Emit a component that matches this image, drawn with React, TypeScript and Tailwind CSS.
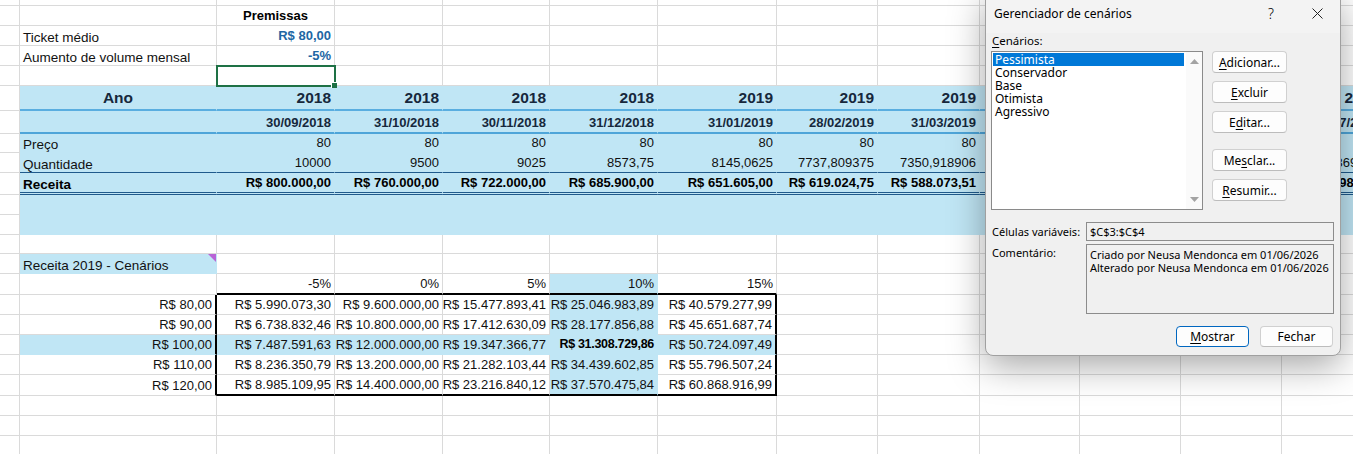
import React from 'react';
import { twMerge } from 'tailwind-merge';

const GRID =
  'grid grid-cols-[20px_197px_118px_108px_107px_108px_119px_101px_102px_100px_101px_101px_101px]';
const COLS = 13;

const BLUE = 'bg-[#c0e6f5] border-[#c0e6f5]';
const NUM = 'justify-end text-[13px]';
const HEAD = 'font-bold text-[#16283c]';
const BOX_R = 'border-r-2 border-r-black';
const BOX_B = 'border-b-2 border-b-black';

type Cell = { v?: React.ReactNode; k?: string } | undefined;

function Row({ h, cells = [], k = '' }: { h: string; cells?: Cell[]; k?: string }) {
  return (
    <div className={`${GRID} ${h}`}>
      {Array.from({ length: COLS }, (_, i) => {
        const c = cells[i];
        return (
          <div
            key={i}
            className={twMerge(
              'flex items-end overflow-hidden whitespace-nowrap border-r border-b border-[#dadada] px-[3px] leading-[14px]',
              i > 0 ? k : '',
              c?.k
            )}
          >
            {c?.v}
          </div>
        );
      })}
    </div>
  );
}

const years = ['2018', '2018', '2018', '2018', '2019', '2019', '2019', '2019', '2019', '2019', '2019'];
const dates = [
  '30/09/2018', '31/10/2018', '30/11/2018', '31/12/2018', '31/01/2019', '28/02/2019',
  '31/03/2019', '30/04/2019', '31/05/2019', '30/06/2019', '31/07/2019',
];
const qty = [
  '10000', '9500', '9025', '8573,75', '8145,0625', '7737,809375', '7350,918906',
  '6983,372961', '6634,204313', '6302,494097', '5987,369392',
];
const revenue = [
  'R$ 800.000,00', 'R$ 760.000,00', 'R$ 722.000,00', 'R$ 685.900,00', 'R$ 651.605,00',
  'R$ 619.024,75', 'R$ 588.073,51', 'R$ 558.669,84', 'R$ 530.736,35', 'R$ 504.199,53',
  'R$ 478.989,55',
];

const pcts = ['-5%', '0%', '5%', '10%', '15%'];
const scenarios = [
  ['R$ 80,00', 'R$ 5.990.073,30', 'R$ 9.600.000,00', 'R$ 15.477.893,41', 'R$ 25.046.983,89', 'R$ 40.579.277,99'],
  ['R$ 90,00', 'R$ 6.738.832,46', 'R$ 10.800.000,00', 'R$ 17.412.630,09', 'R$ 28.177.856,88', 'R$ 45.651.687,74'],
  ['R$ 100,00', 'R$ 7.487.591,63', 'R$ 12.000.000,00', 'R$ 19.347.366,77', 'R$ 31.308.729,86', 'R$ 50.724.097,49'],
  ['R$ 110,00', 'R$ 8.236.350,79', 'R$ 13.200.000,00', 'R$ 21.282.103,44', 'R$ 34.439.602,85', 'R$ 55.796.507,24'],
  ['R$ 120,00', 'R$ 8.985.109,95', 'R$ 14.400.000,00', 'R$ 23.216.840,12', 'R$ 37.570.475,84', 'R$ 60.868.916,99'],
];

function Btn({ children, primary = false, wide = false }: { children: React.ReactNode; primary?: boolean; wide?: boolean }) {
  return (
    <button
      className={twMerge(
        'flex h-[22px] w-[75px] items-center justify-center rounded-[4px] border border-[#d0d0d0] border-b-[#bcbcbc] bg-[#fdfdfd] text-[12px] leading-[13px] text-black',
        wide ? '' : 'h-[21px] w-[73px]',
        primary ? 'border-[#0067c0] border-b-[#0067c0]' : ''
      )}
    >
      {children}
    </button>
  );
}

const U = ({ children }: { children: React.ReactNode }) => (
  <span className="underline decoration-1 underline-offset-[2px]">{children}</span>
);

function ScenarioDialog() {
  const items = ['Pessimista', 'Conservador', 'Base', 'Otimista', 'Agressivo'];
  return (
    <div className="absolute left-[985px] top-[-8px] flex h-[364px] w-[356px] flex-col overflow-hidden rounded-[8px] border border-[#a0a0a0] bg-[#f0f0f0] font-['Noto_Sans',sans-serif] text-[11px] leading-[13px] text-black shadow-[0_10px_36px_rgba(0,0,0,0.35)]">
      {/* title bar */}
      <div className="flex h-[40px] shrink-0 items-center bg-[#f3f3f3] pl-[8px] text-[12px]">
        <span className="flex-1">Gerenciador de cenários</span>
        <span className="flex w-[46px] justify-center text-[14px] font-light">?</span>
        <span className="flex w-[46px] justify-center">
          <svg width="11" height="11" viewBox="0 0 11 11">
            <path d="M0.5 0.5 L10.5 10.5 M10.5 0.5 L0.5 10.5" stroke="#222" strokeWidth="1" fill="none" />
          </svg>
        </span>
      </div>

      <div className="flex flex-col px-[5px] pt-[1px]">
        <div className="pl-[1px] text-[11.5px]">
          <U>C</U>enários:
        </div>

        <div className="mt-[4px] flex">
          <div className="flex h-[159px] w-[212px] border border-[#8a8a8a] bg-white">
            <div className="flex flex-1 flex-col pl-[1px] pr-[2px] pt-[1px]">
              {items.map((it, i) => (
                <div
                  key={it}
                  className={`h-[13px] px-[2px] text-[12px] leading-[13px] ${i === 0 ? 'bg-[#0078d7] text-white' : ''}`}
                >
                  {it}
                </div>
              ))}
            </div>
            <div className="flex w-[16px] flex-col items-center justify-between bg-[#fafafa] py-[7px]">
              <svg width="9" height="5" viewBox="0 0 9 5">
                <path d="M0 5 L4.5 0 L9 5 Z" fill="#a3a3a3" />
              </svg>
              <svg width="9" height="5" viewBox="0 0 9 5">
                <path d="M0 0 L9 0 L4.5 5 Z" fill="#a3a3a3" />
              </svg>
            </div>
          </div>

          <div className="ml-[9px] flex flex-col gap-[8px]">
            <Btn wide>
              <U>A</U>dicionar...
            </Btn>
            <Btn wide>
              <U>E</U>xcluir
            </Btn>
            <Btn wide>
              E<U>d</U>itar...
            </Btn>
            <div className="mt-[8px]">
              <Btn wide>
                Me<U>s</U>clar...
              </Btn>
            </div>
            <Btn wide>
              <U>R</U>esumir...
            </Btn>
          </div>
        </div>

        <div className="mt-[12px] flex items-center">
          <div className="w-[95px] pl-[1px]">Células variáveis:</div>
          <div className="flex h-[19px] w-[248px] items-center border border-[#8c8c8c] px-[3px]">$C$3:$C$4</div>
        </div>

        <div className="mt-[3px] flex">
          <div className="w-[95px] pl-[1px] pt-[2px]">Comentário:</div>
          <div className="h-[70px] w-[248px] border border-[#8c8c8c] px-[3px] pt-[3px]">
            <div>Criado por Neusa Mendonca em 01/06/2026</div>
            <div>Alterado por Neusa Mendonca em 01/06/2026</div>
          </div>
        </div>

        <div className="mt-[12px] flex justify-end gap-[11px] pr-[2px]">
          <Btn primary>
            <U>M</U>ostrar
          </Btn>
          <Btn>Fechar</Btn>
        </div>
      </div>
    </div>
  );
}

export default function App() {
  const u = undefined;
  return (
    <div className="relative h-[454px] w-[1353px] overflow-hidden bg-white font-['Liberation_Sans',Arial,sans-serif] text-[13.5px] text-[#111]">
      <Row h="h-[6px]" />
      <Row h="h-[20px]" cells={[u, u, { v: 'Premissas', k: 'justify-center text-[13px] font-bold text-black' }]} />
      <Row h="h-[20px]" cells={[u, { v: 'Ticket médio' }, { v: 'R$ 80,00', k: `${NUM} font-bold text-[#2166a3]` }]} />
      <Row h="h-[20px]" cells={[u, { v: 'Aumento de volume mensal' }, { v: '-5%', k: `${NUM} font-bold text-[#2166a3]` }]} />
      <Row
        h="h-[20px]"
        cells={[
          u,
          u,
          {
            k: 'relative overflow-visible',
            v: (
              <>
                <span className="absolute -left-px -top-px h-[22px] w-[120px] border-2 border-[#1e7145]" />
                <span className="absolute -bottom-[3px] -right-[3px] h-[6px] w-[6px] border-l border-t border-white bg-[#1e7145]" />
              </>
            ),
          },
        ]}
      />

      {/* projection table */}
      <Row
        h="h-[25px]"
        k={`${BLUE} border-b-2 border-b-[#5aaee0] leading-[16px]`}
        cells={[u, { v: 'Ano', k: `${HEAD} justify-center text-[15.5px]` }, ...years.map((y) => ({ v: y, k: `${HEAD} justify-end text-[15.5px]` }))]}
      />
      <Row
        h="h-[23px]"
        k={`${BLUE} border-b-2 border-b-[#4ea5d9]`}
        cells={[u, u, ...dates.map((d) => ({ v: d, k: `${HEAD} justify-end text-[13px]` }))]}
      />
      <Row h="h-[19px]" k={BLUE} cells={[u, { v: 'Preço' }, ...dates.map(() => ({ v: '80', k: NUM }))]} />
      <Row
        h="h-[20px]"
        k={`${BLUE} border-b-[#1f5a8c]`}
        cells={[u, { v: 'Quantidade' }, ...qty.map((q) => ({ v: q, k: NUM }))]}
      />
      <Row
        h="h-[22px]"
        k={`${BLUE} border-double border-b-[3px] border-b-[#1f5a8c]`}
        cells={[u, { v: 'Receita', k: 'font-bold text-black' }, ...revenue.map((r) => ({ v: r, k: `${NUM} font-bold text-black` }))]}
      />
      <Row h="h-[20px]" k={BLUE} />
      <Row h="h-[20px]" k={BLUE} />
      <Row h="h-[19px]" />

      {/* scenario table */}
      <Row
        h="h-[20px]"
        cells={[
          u,
          {
            k: `${BLUE} relative`,
            v: (
              <>
                Receita 2019 - Cenários
                <svg className="absolute right-0 top-0" width="8" height="8" viewBox="0 0 8 8">
                  <path d="M0 0 L8 0 L8 8 Z" fill="#b864d6" />
                </svg>
              </>
            ),
          },
        ]}
      />
      <Row
        h="h-[21px]"
        cells={[u, u, ...pcts.map((p, j) => ({ v: p, k: `${j === 3 ? BLUE : ''} ${NUM} ${BOX_B}` }))]}
      />
      {scenarios.map((s, r) => (
        <Row
          key={r}
          h={r === 4 ? 'h-[21px]' : 'h-[20px]'}
          cells={[
            u,
            { v: s[0], k: `${r === 2 ? BLUE : ''} ${NUM} ${BOX_R}` },
            ...s.slice(1).map((val, j) => ({
              v: val,
              k: [
                j === 3 || r === 2 ? BLUE : '',
                NUM,
                j === 4 ? BOX_R : '',
                r === 4 ? BOX_B : '',
                r === 2 && j === 3 ? 'font-bold text-[12.5px] tracking-[-0.3px] text-black' : '',
              ].join(' '),
            })),
          ]}
        />
      ))}
      <Row h="h-[20px]" />
      <Row h="h-[20px]" />
      <Row h="h-[20px]" />

      <ScenarioDialog />
    </div>
  );
}
